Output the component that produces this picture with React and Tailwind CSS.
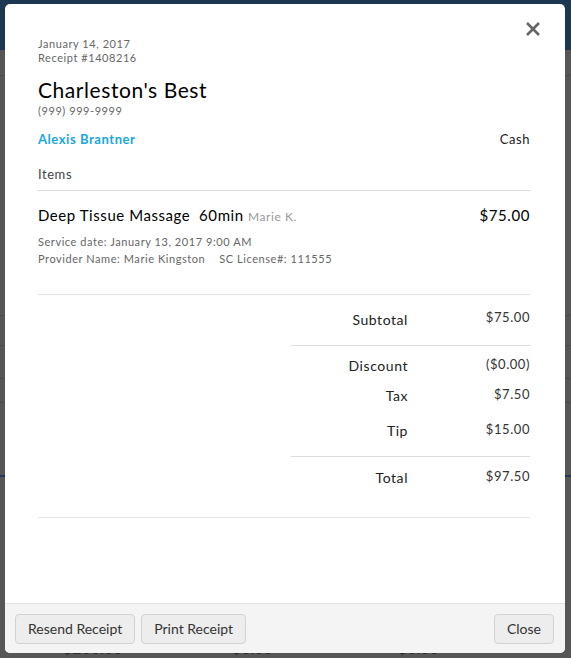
import React from 'react';

export default function App() {
    // Totals block data
    const totals = [
        { label: 'Discount', value: '($0.00)', cls: 'h-[30px]' },
        { label: 'Tax', value: '$7.50', cls: 'h-[35px]' },
        { label: 'Tip', value: '$15.00', cls: 'h-[30px]' },
    ];

    return (
        <div className="relative w-[571px] h-[658px] overflow-hidden bg-[#565656]" style={{ fontFamily: 'Lato, "Open Sans", sans-serif' }}>
            {/* Page behind the overlay */}
            <div className="h-[50px] bg-[#1c3751]"></div>
            <div className="h-[26px] border-b border-[#4a4a4a]"></div>
            <div className="h-[240px] border-b border-[#4a4a4a]"></div>
            <div className="h-[30px] border-b border-[#4a4a4a]"></div>
            <div className="h-[33px] border-b border-[#4a4a4a]"></div>
            <div className="h-[24px] border-b border-[#4a4a4a]"></div>
            <div className="h-[74px] border-b-2 border-[#1d3a5a]"></div>
            <div className="flex pt-[161px] pl-[63px] text-[#2a2a2a] text-[16px] leading-[20px]">
                <span className="w-[169px]">$200.00</span>
                <span className="w-[166px]">$0.00</span>
                <span>$0.00</span>
            </div>

            {/* Receipt modal */}
            <div className="absolute left-[5px] top-[4px] w-[560px] h-[649px] bg-white rounded-[5px] flex flex-col overflow-hidden">
                <button className="absolute right-[24px] top-[17px] text-[#666]">
                    <svg width="16" height="16" viewBox="0 0 16 16">
                        <path d="M2 2 L14 14 M14 2 L2 14" stroke="currentColor" strokeWidth="2.6" />
                    </svg>
                </button>

                <div className="flex-1 pl-[33px] pr-[35px] pt-[33px] tracking-[0.035em]">
                    <div className="text-[11px] leading-[14px] text-[#666]">January 14, 2017</div>
                    <div className="text-[11px] leading-[14px] text-[#666]">Receipt #1408216</div>
                    <div className="mt-[11px] text-[21px] leading-[27px] text-black">Charleston's Best</div>
                    <div className="mt-[1px] text-[11px] leading-[14px] text-[#666]">(999) 999-9999</div>

                    <div className="mt-[13px] flex justify-between items-center text-[13px] leading-[16px]">
                        <span className="font-bold text-[#19a7de]">Alexis Brantner</span>
                        <span className="text-[#222]">Cash</span>
                    </div>

                    <div className="mt-[19px] pb-[8px] border-b border-[#ddd] text-[13px] leading-[16px] text-[#444]">Items</div>

                    {/* Item */}
                    <div className="pt-[14px] pb-[27px] border-b border-[#e2e2e2]">
                        <div className="flex justify-between items-baseline text-[15px] leading-[20px] text-black">
                            <span>
                                Deep Tissue Massage&nbsp; 60min <span className="text-[12px] text-[#999]">Marie K.</span>
                            </span>
                            <span>$75.00</span>
                        </div>
                        <div className="mt-[6px] text-[11px] leading-[17px] text-[#666]">Service date: January 13, 2017 9:00 AM</div>
                        <div className="text-[11px] leading-[17px] text-[#666]">
                            Provider Name: Marie Kingston<span className="ml-[14px]">SC License#: 111555</span>
                        </div>
                    </div>

                    {/* Totals */}
                    <div className="pb-[30px] border-b border-[#e6e6e6]">
                        <div className="ml-[253px]">
                            <div className="flex h-[51px] items-center border-b border-[#ddd] pb-[1px]">
                                <span className="w-[117px] text-right text-[14px] text-[#222]">Subtotal</span>
                                <span className="flex-1 text-right text-[13px] text-[#333] -mt-[4px]">$75.00</span>
                            </div>
                            <div className="pt-[9px] border-b border-[#ddd] pb-[6px]">
                                {totals.map((t) => (
                                    <div key={t.label} className={`flex items-start ${t.cls}`}>
                                        <span className="w-[117px] text-right text-[14px] leading-[18px] text-[#222] mt-[2px]">{t.label}</span>
                                        <span className="flex-1 text-right text-[13px] leading-[18px] text-[#333]">{t.value}</span>
                                    </div>
                                ))}
                            </div>
                            <div className="flex pt-[10px]">
                                <span className="w-[117px] text-right text-[14px] leading-[18px] text-[#222] mt-[2px]">Total</span>
                                <span className="flex-1 text-right text-[13px] leading-[18px] text-[#333]">$97.50</span>
                            </div>
                        </div>
                    </div>
                </div>

                {/* Footer */}
                <div className="h-[50px] bg-[#f4f4f4] border-t border-[#e0e0e0] flex items-center justify-between pl-[10px] pr-[11px]">
                    <div className="flex gap-[6px]">
                        <button className="h-[30px] px-[12px] rounded-[4px] border border-[#d2d2d2] bg-[#ededed] text-[14px] text-[#333]">Resend Receipt</button>
                        <button className="h-[30px] px-[12px] rounded-[4px] border border-[#d2d2d2] bg-[#ededed] text-[14px] text-[#333]">Print Receipt</button>
                    </div>
                    <button className="h-[30px] px-[12px] rounded-[4px] border border-[#d2d2d2] bg-[#ededed] text-[14px] text-[#333]">Close</button>
                </div>
            </div>
        </div>
    );
}
